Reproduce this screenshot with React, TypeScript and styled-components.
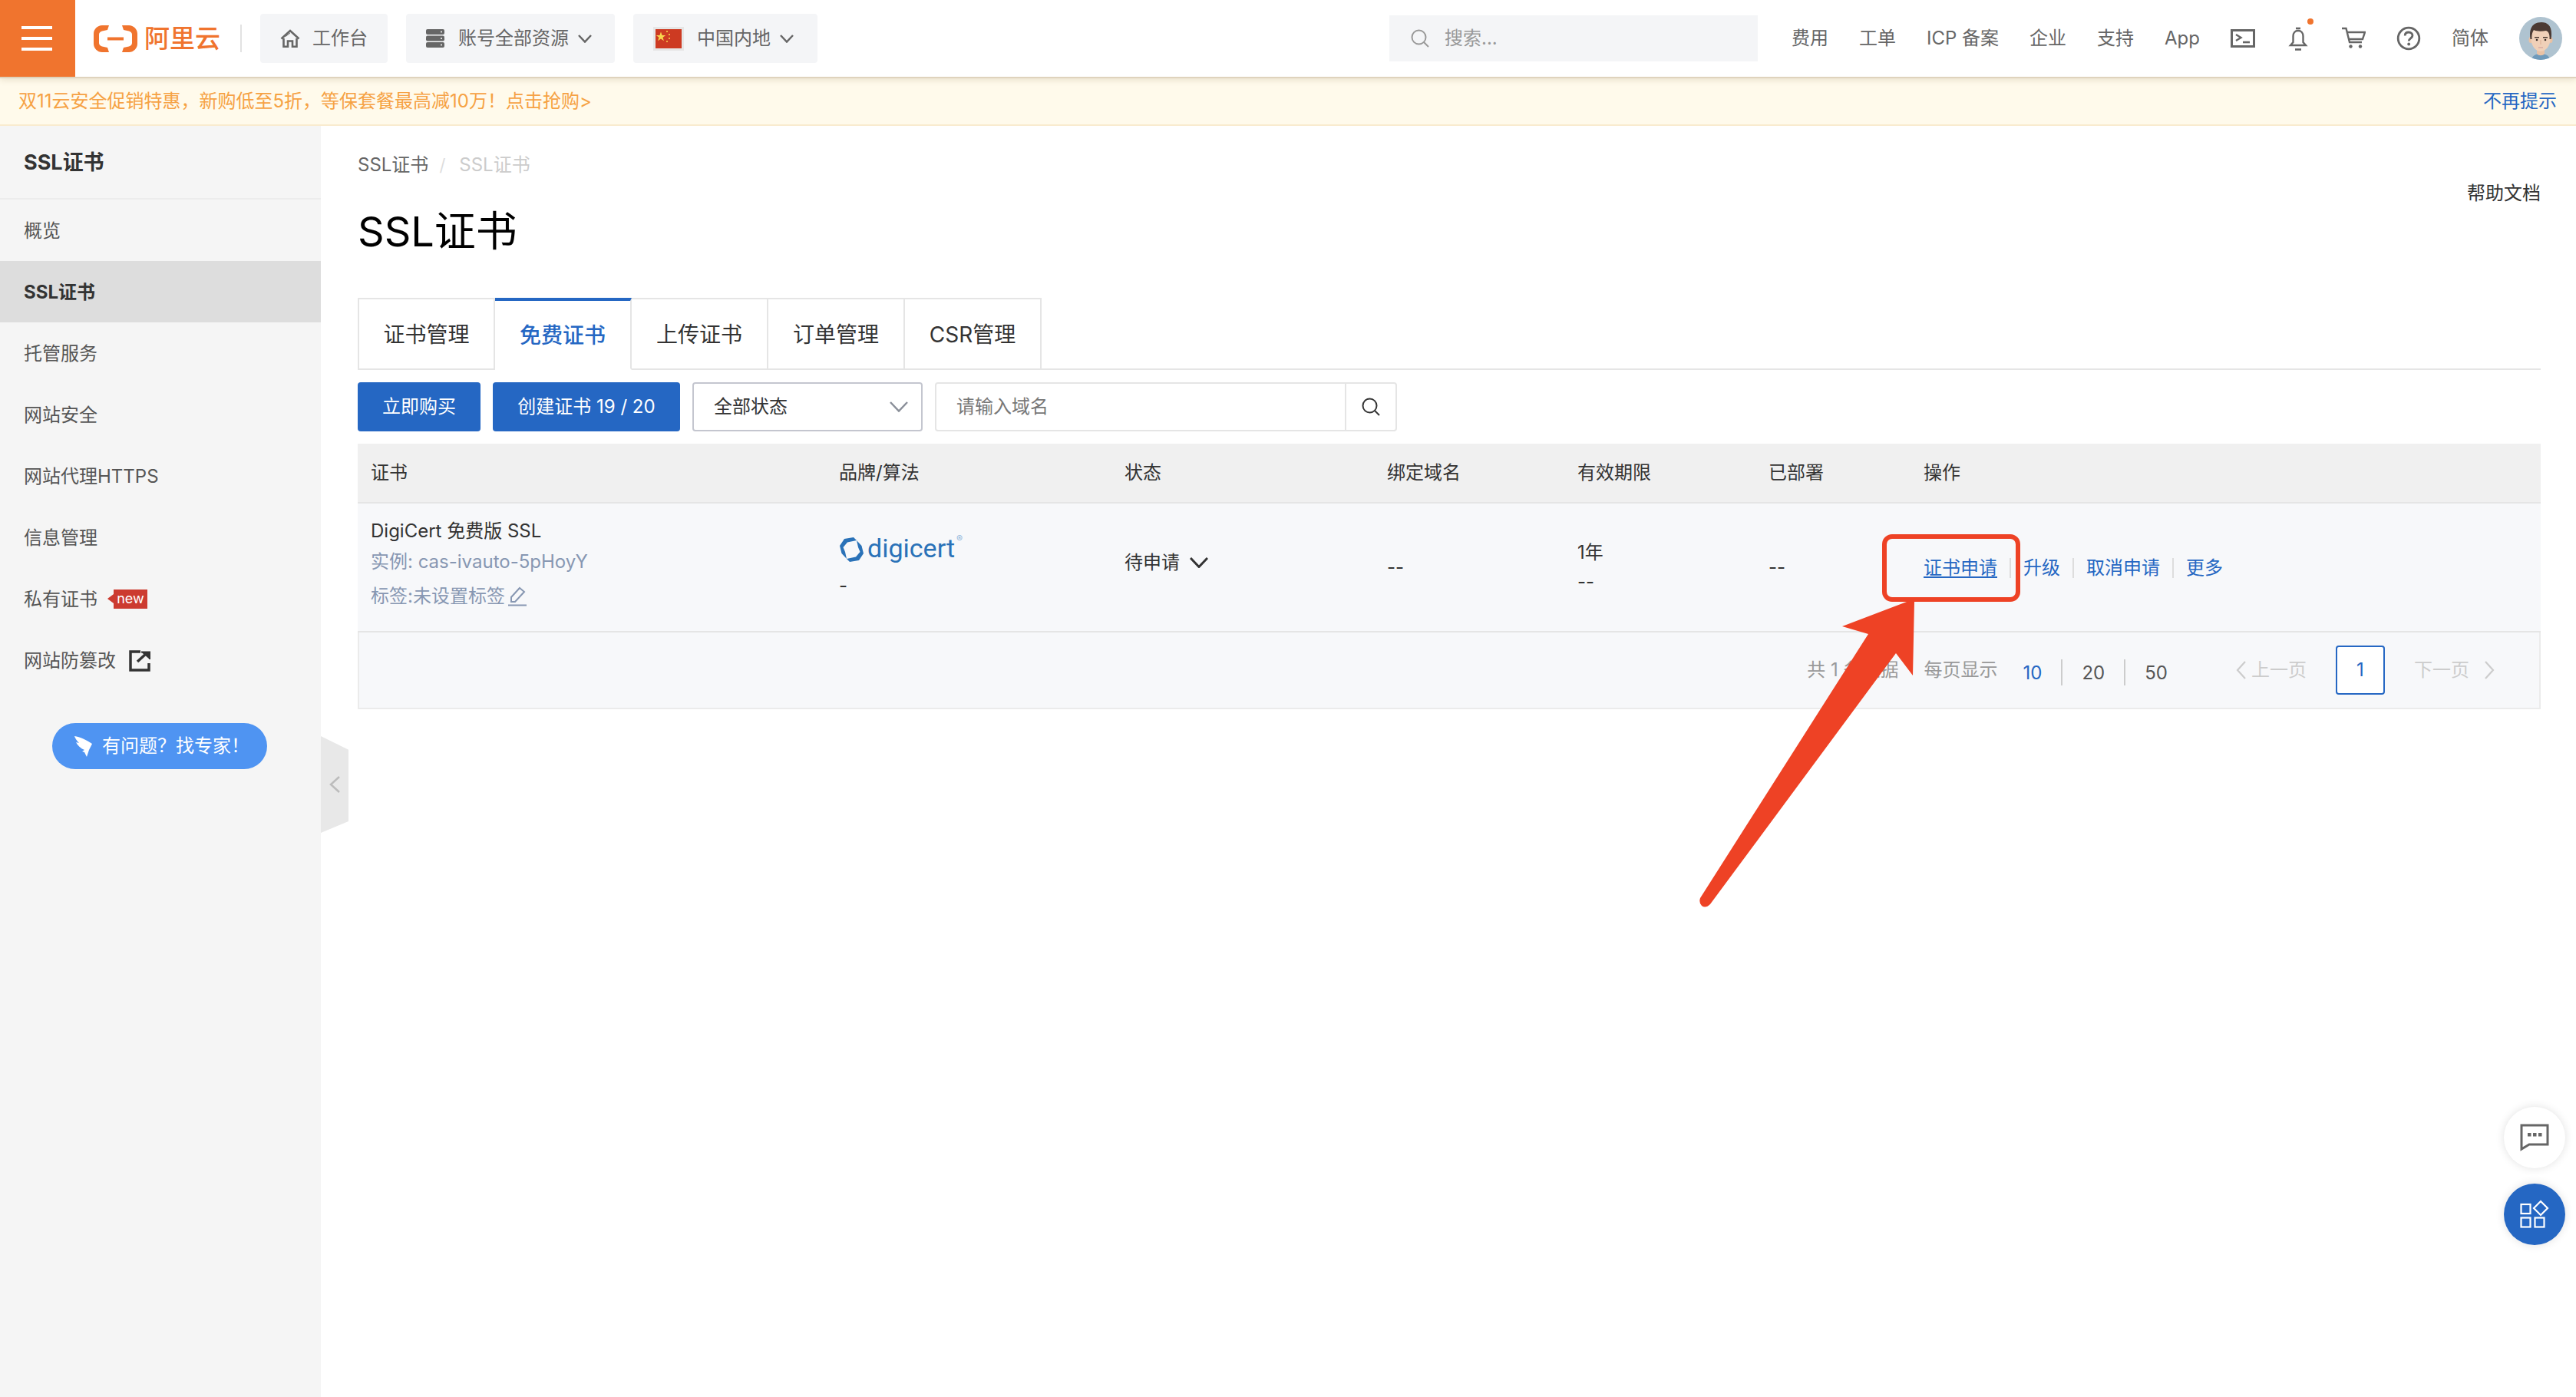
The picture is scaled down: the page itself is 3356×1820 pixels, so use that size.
import React from "react";
import styled, { createGlobalStyle } from "styled-components";

const GlobalStyle = createGlobalStyle`
  html, body { margin: 0; padding: 0; background: #fff; overflow: hidden; }
  * { box-sizing: border-box; }
  body { font-family: Inter, "Noto Sans CJK SC", sans-serif; font-size: 24px; line-height: 34px; color: #333; }
`;

const BLUE = "#2567c3";
const ORANGE = "#f0742e";
const RED = "#ee4225";

const Page = styled.div`
  position: relative;
  width: 3356px;
  height: 1820px;
  overflow: hidden;
  display: flex;
  flex-direction: column;
`;

/* ---------- top bar ---------- */
const TopBar = styled.header`
  position: relative;
  z-index: 2;
  flex: none;
  height: 100px;
  display: flex;
  align-items: center;
  background: #fff;
  box-shadow: 0 2px 0 #dfd3bd, 0 4px 8px rgba(110, 90, 40, 0.16);
`;
const MenuBlock = styled.div`
  width: 98px;
  height: 100px;
  padding: 34px 30px 34px 28px;
  background: ${ORANGE};
  display: flex;
  flex-direction: column;
  justify-content: space-between;
`;
const MenuLine = styled.i`
  display: block;
  height: 4px;
  background: #fff;
`;
const Brand = styled.div`
  margin-left: 24px;
  width: 166px;
  display: flex;
  align-items: center;
  gap: 9px;
`;
const BrandName = styled.span`
  color: ${ORANGE};
  font-size: 33px;
  font-weight: 500;
  line-height: 36px;
  white-space: nowrap;
`;
const BrandDivider = styled.i`
  width: 2px;
  height: 36px;
  margin: 0 24px 0 25px;
  background: #e2e2e2;
`;
const TopButtons = styled.div`
  display: flex;
  gap: 24px;
`;
const TopButton = styled.div<{ $w: number }>`
  width: ${(p) => p.$w}px;
  height: 64px;
  padding-left: 26px;
  display: flex;
  align-items: center;
  background: #f4f5f7;
  border-radius: 4px;
  color: #666;
  white-space: nowrap;
`;
const TopLabel = styled.span<{ $ml: number }>`
  margin-left: ${(p) => p.$ml}px;
`;
const TopChevron = styled.span`
  margin-left: 12px;
  display: flex;
  flex: none;
`;
const TopRight = styled.div`
  margin-left: auto;
  padding-right: 18px;
  display: flex;
  align-items: center;
  gap: 40px;
`;
const SearchBox = styled.div`
  width: 480px;
  height: 60px;
  margin-right: 4px;
  padding-left: 28px;
  display: flex;
  align-items: center;
  gap: 20px;
  background: #f4f5f7;
  color: #999;
`;
const TopLink = styled.span`
  color: #666;
  white-space: nowrap;
`;
const TopIcon = styled.svg`
  display: block;
  flex: none;
`;
const BellWrap = styled.span`
  position: relative;
  display: block;
  width: 32px;
  height: 32px;
`;
const BellDot = styled.i`
  position: absolute;
  left: 28px;
  top: -10px;
  width: 8px;
  height: 8px;
  border-radius: 50%;
  background: ${ORANGE};
`;

/* ---------- banner ---------- */
const Banner = styled.div`
  flex: none;
  height: 64px;
  padding: 2px 25px 0 24px;
  display: flex;
  align-items: center;
  justify-content: space-between;
  background: #fffaeb;
  border-bottom: 2px solid #f9ebcf;
  color: #f6a244;
`;
const BannerClose = styled.span`
  color: ${BLUE};
`;

/* ---------- shell ---------- */
const Shell = styled.div`
  position: relative;
  flex: 1;
  display: flex;
  min-height: 0;
`;
const Sidebar = styled.aside`
  flex: none;
  width: 418px;
  background: #f5f5f5;
`;
const SideTitle = styled.div`
  height: 96px;
  padding: 2px 31px 0;
  display: flex;
  align-items: center;
  border-bottom: 2px solid #ececec;
  font-size: 27px;
  font-weight: 700;
  color: #333;
`;
const SideItem = styled.div<{ $active?: boolean }>`
  height: 80px;
  padding: 2px 0 0 31px;
  display: flex;
  align-items: center;
  background: ${(p) => (p.$active ? "#dddddd" : "transparent")};
  font-weight: ${(p) => (p.$active ? 700 : 400)};
  color: ${(p) => (p.$active ? "#333" : "#555")};
`;
const NewBadge = styled.span`
  position: relative;
  top: -1px;
  margin-left: 21px;
  width: 44px;
  height: 25px;
  background: #cc3b30;
  color: #fff;
  font-size: 18px;
  line-height: 24px;
  text-align: center;
  &::before {
    content: "";
    position: absolute;
    left: -8px;
    top: 6px;
    border: 6px solid transparent;
    border-left: 0;
    border-right: 8px solid #cc3b30;
  }
`;
const ExternalIcon = styled.svg`
  margin-left: 17px;
  flex: none;
`;
const ExpertButton = styled.div`
  width: 280px;
  height: 60px;
  margin: 42px 0 0 68px;
  padding-left: 29px;
  display: flex;
  align-items: center;
  gap: 12px;
  border-radius: 30px;
  background: #4f94f2;
  color: #fff;
  white-space: nowrap;
`;
const CollapseTab = styled.div`
  position: absolute;
  left: 418px;
  top: 795px;
  width: 36px;
  height: 126px;
  display: flex;
  align-items: center;
  justify-content: center;
  background: #e8e8e8;
  clip-path: polygon(0 0, 100% 14%, 100% 88%, 0 100%);
`;

/* ---------- main ---------- */
const Main = styled.main`
  flex: 1;
  min-width: 0;
  padding: 34px 46px 0 48px;
`;
const Crumbs = styled.div`
  display: flex;
  gap: 14px;
  color: #666;
`;
const CrumbSep = styled.span`
  color: #ddd;
  font-size: 22px;
`;
const CrumbCurrent = styled.span`
  color: #ccc;
  margin-left: 4px;
`;
const HeadRow = styled.div`
  margin-top: 3px;
  display: flex;
  justify-content: space-between;
`;
const Title = styled.h1`
  margin: 34px 0 0;
  font-size: 54px;
  line-height: 66px;
  font-weight: 400;
  color: #000;
`;
const HelpLink = styled.span`
  color: #333;
`;
const TabBar = styled.div`
  margin-top: 53px;
  height: 94px;
  display: flex;
  border-bottom: 2px solid #e5e5e5;
`;
const Tab = styled.div<{ $active?: boolean; $first?: boolean }>`
  width: ${(p) => (p.$first ? 179 : 178)}px;
  height: 94px;
  padding-top: 2px;
  display: flex;
  align-items: center;
  justify-content: center;
  background: #fff;
  font-size: 28px;
  font-weight: ${(p) => (p.$active ? 500 : 400)};
  color: ${(p) => (p.$active ? BLUE : "#333")};
  border-top: ${(p) => (p.$active ? `4px solid ${BLUE}` : "2px solid #e5e5e5")};
  border-right: 2px solid #e5e5e5;
  border-left: ${(p) => (p.$first ? "2px solid #e5e5e5" : "0")};
  border-bottom: ${(p) => (p.$active ? "2px solid #fff" : "2px solid #e5e5e5")};
`;
const Toolbar = styled.div`
  margin-top: 16px;
  height: 64px;
  display: flex;
  gap: 16px;
`;
const PrimaryButton = styled.div<{ $w: number }>`
  width: ${(p) => p.$w}px;
  height: 64px;
  display: flex;
  align-items: center;
  justify-content: center;
  border-radius: 4px;
  background: ${BLUE};
  color: #fff;
`;
const StatusSelect = styled.div`
  width: 300px;
  height: 64px;
  padding: 0 17px 0 26px;
  display: flex;
  align-items: center;
  justify-content: space-between;
  border: 2px solid #c4c6cf;
  border-radius: 4px;
  color: #333;
`;
const DomainSearch = styled.div`
  width: 602px;
  height: 64px;
  display: flex;
  border: 2px solid #e5e5e5;
  border-radius: 4px;
`;
const DomainInput = styled.div`
  flex: 1;
  padding-left: 26px;
  display: flex;
  align-items: center;
  color: #777;
`;
const DomainButton = styled.div`
  width: 66px;
  display: flex;
  align-items: center;
  justify-content: center;
  border-left: 2px solid #e5e5e5;
`;

/* ---------- table ---------- */
const Table = styled.div`
  margin-top: 16px;
`;
const COLUMNS = "610px 372px 342px 248px 249px 202px 1fr";
const HeadRowGrid = styled.div`
  height: 78px;
  display: grid;
  grid-template-columns: ${COLUMNS};
  background: #f0f0f0;
  border-bottom: 2px solid #e5e5e5;
`;
const HeadCell = styled.div`
  padding-left: 17px;
  display: flex;
  align-items: center;
  color: #333;
`;
const BodyRow = styled.div`
  height: 168px;
  display: grid;
  grid-template-columns: ${COLUMNS};
  background: #f7f8fa;
  border-bottom: 2px solid #e5e5e5;
`;
const Cell = styled.div<{ $top: number }>`
  padding: ${(p) => p.$top}px 0 0 17px;
  color: #333;
`;
const MutedLine = styled.div<{ $mt: number }>`
  margin-top: ${(p) => p.$mt}px;
  display: flex;
  align-items: center;
  color: #8797b2;
`;
const EditIcon = styled.svg`
  margin-left: 4px;
  flex: none;
`;
const LogoRow = styled.div`
  height: 36px;
  display: flex;
  align-items: center;
`;
const LogoWord = styled.span`
  margin-left: 4px;
  color: #2a72b8;
  font-family: Roboto, sans-serif;
  font-size: 34px;
  line-height: 36px;
  position: relative;
  top: -2px;
`;
const LogoMark = styled.sup`
  margin: -2px 0 0 2px;
  align-self: flex-start;
  color: #8fb5da;
  font-size: 12px;
  line-height: 12px;
`;
const SmallLine = styled.div<{ $mt: number }>`
  margin-top: ${(p) => p.$mt}px;
`;
const StatusRow = styled.div`
  display: flex;
  align-items: center;
  gap: 13px;
`;
const ActionRow = styled.div`
  display: flex;
  align-items: center;
  white-space: nowrap;
`;
const ActionLink = styled.span<{ $underline?: boolean }>`
  color: ${BLUE};
  text-decoration: ${(p) => (p.$underline ? "underline" : "none")};
  text-underline-offset: 3px;
`;
const ActionSep = styled.i`
  width: 2px;
  height: 26px;
  margin: 0 16px;
  background: #ddd;
`;

const Pager = styled.div`
  height: 100px;
  padding: 0 58px 0 0;
  display: flex;
  align-items: center;
  justify-content: flex-end;
  background: #f7f8fa;
  border: 2px solid #ebebeb;
  border-top: 0;
  white-space: nowrap;
`;
const PagerText = styled.span<{ $mr: number }>`
  margin-right: ${(p) => p.$mr}px;
  color: #999;
`;
const SizeOption = styled.span<{ $active?: boolean }>`
  padding-top: 7px;
  color: ${(p) => (p.$active ? BLUE : "#555")};
`;
const SizeSep = styled.i`
  width: 2px;
  height: 34px;
  margin: 6px 25px 0;
  background: #ccc;
`;
const PrevNext = styled.span<{ $ml: number; $gap: number }>`
  margin-left: ${(p) => p.$ml}px;
  display: flex;
  align-items: center;
  gap: ${(p) => p.$gap}px;
  color: #ccc;
`;
const PageBox = styled.span`
  width: 64px;
  height: 64px;
  margin-left: 38px;
  display: flex;
  align-items: center;
  justify-content: center;
  background: #fff;
  border: 2px solid ${BLUE};
  border-radius: 4px;
  color: ${BLUE};
`;

/* ---------- overlays ---------- */
const Fab = styled.div<{ $top: number; $blue?: boolean }>`
  position: absolute;
  right: 14px;
  top: ${(p) => p.$top}px;
  width: 80px;
  height: 80px;
  display: flex;
  align-items: center;
  justify-content: center;
  border-radius: 50%;
  background: ${(p) => (p.$blue ? BLUE : "#fff")};
  box-shadow: 0 0 12px rgba(0, 0, 0, 0.12);
`;
const Annotation = styled.svg`
  position: absolute;
  left: 0;
  top: 0;
  pointer-events: none;
`;

const Chevron = ({ w = 18, h = 11, c = "#666", sw = 2.5 }: { w?: number; h?: number; c?: string; sw?: number }) => (
  <svg width={w} height={h} viewBox={`0 0 ${w} ${h}`} fill="none">
    <path d={`M1 1 L${w / 2} ${h - 1.5} L${w - 1} 1`} stroke={c} strokeWidth={sw} />
  </svg>
);

const SearchGlyph = ({ c, s }: { c: string; s: number }) => (
  <svg width={s} height={s} viewBox="0 0 24 24" fill="none">
    <circle cx="10.5" cy="10.5" r="9" stroke={c} strokeWidth="2" />
    <path d="M17 17 L23 23" stroke={c} strokeWidth="2" />
  </svg>
);

const AliLogo = () => (
  <svg width="57" height="35" viewBox="0 0 57 35" fill={ORANGE}>
    <path d="M20 0 H11 C5 0 0 5 0 11 V24 C0 30 5 35 11 35 H20 L18 29 L11 27.500 C8.500 27 7 25 7 23 V12 C7 10 8.500 8 11 7.500 L18 6 Z" />
    <path d="M37 0 H46 C52 0 57 5 57 11 V24 C57 30 52 35 46 35 H37 L39 29 L46 27.500 C48.500 27 50 25 50 23 V12 C50 10 48.500 8 46 7.500 L39 6 Z" />
    <rect x="18" y="15.500" width="21" height="4" />
  </svg>
);

const HomeIcon = () => (
  <svg width="26" height="24" viewBox="0 0 26 24" fill="none" stroke="#666" strokeWidth="2.600">
    <path d="M1.500 12.500 L13 2 L24.500 12.500" />
    <path d="M4.500 12 V22.800 H10 V15.500 H16 V22.800 H21.500 V12" />
    <path d="M7 9.500 L13 5" strokeWidth="1" />
  </svg>
);

const ServerIcon = () => (
  <svg width="24" height="24" viewBox="0 0 24 24">
    <rect x="0" y="0" width="24" height="7" rx="2" fill="#666" />
    <rect x="0" y="8.500" width="24" height="7" rx="2" fill="#666" />
    <rect x="0" y="17" width="24" height="7" rx="2" fill="#666" />
    <circle cx="20" cy="3.500" r="1" fill="#fff" />
    <circle cx="20" cy="12" r="1" fill="#fff" />
    <circle cx="20" cy="20.500" r="1" fill="#fff" />
  </svg>
);

const FlagIcon = () => (
  <svg width="40" height="31" viewBox="0 0 40 31">
    <rect width="40" height="31" fill="#e6e6e6" />
    <rect x="3" y="3" width="34" height="25" fill="#cd3a22" />
    <polygon fill="#f8d64e" points="10,6.500 11.600,11 16.200,11 12.500,13.800 13.900,18.300 10,15.600 6.100,18.300 7.500,13.800 3.800,11 8.400,11" />
    <circle cx="18" cy="6" r="1" fill="#f8d64e" />
    <circle cx="21" cy="10" r="1" fill="#f8d64e" />
    <circle cx="21" cy="15" r="1" fill="#f8d64e" />
    <circle cx="18" cy="19" r="1" fill="#f8d64e" />
  </svg>
);

const TerminalIcon = () => (
  <TopIcon width="32" height="24" viewBox="0 0 32 24" fill="none" stroke="#666">
    <rect x="1.500" y="1.500" width="29" height="21" strokeWidth="3" />
    <path d="M7 7 L13.500 11 L7 15" strokeWidth="2.400" />
    <path d="M16 17 H25" strokeWidth="2.600" />
  </TopIcon>
);

const BellIcon = () => (
  <BellWrap>
    <BellDot />
    <TopIcon width="32" height="32" viewBox="0 0 32 32" fill="none" stroke="#666" strokeWidth="2.400">
      <path d="M13 3 H19" strokeWidth="2.600" />
      <path d="M9.500 21 V13 C9.500 9 12 6 16 6 C20 6 22.500 9 22.500 13 V21 L26 25 H6 Z" />
      <path d="M12 30.500 H20" strokeWidth="2.600" />
    </TopIcon>
  </BellWrap>
);

const CartIcon = () => (
  <TopIcon width="32" height="30" viewBox="0 0 32 30" fill="none" stroke="#666" strokeWidth="2.400">
    <path d="M1 2 H6.500 L11 20 H27" />
    <path d="M7.500 7 H31 L28 16 H10" />
    <circle cx="12.500" cy="25.500" r="2.200" fill="#666" stroke="none" />
    <circle cx="25" cy="25.500" r="2.200" fill="#666" stroke="none" />
  </TopIcon>
);

const HelpIcon = () => (
  <TopIcon width="32" height="32" viewBox="0 0 32 32" fill="none">
    <circle cx="16" cy="16" r="13.800" stroke="#666" strokeWidth="2.800" />
    <path d="M11.200 12.500 C11.200 9.500 13.200 8 16 8 C19 8 21 9.800 21 12.300 C21 15.800 16.200 15.800 16.200 19.500" stroke="#666" strokeWidth="2.800" />
    <circle cx="16.200" cy="23.500" r="1.900" fill="#666" />
  </TopIcon>
);

const Avatar = () => (
  <TopIcon width="56" height="56" viewBox="0 0 56 56">
    <defs>
      <clipPath id="avatarClip">
        <circle cx="28" cy="28" r="28" />
      </clipPath>
    </defs>
    <g clipPath="url(#avatarClip)">
      <rect width="56" height="56" fill="#afc3d0" />
      <path d="M16 56 C17 50 22 48 28 48 C34 48 39 50 40 56 Z" fill="#6f9abb" />
      <path d="M23 38 H33 V48 C31 51 25 51 23 48 Z" fill="#e9c2a5" />
      <ellipse cx="15" cy="30" rx="2.500" ry="4" fill="#e9c2a5" />
      <ellipse cx="41" cy="30" rx="2.500" ry="4" fill="#e9c2a5" />
      <path d="M15.500 20 C15.500 10 40.500 10 40.500 20 V29 C40.500 38 34 45 28 45 C22 45 15.500 38 15.500 29 Z" fill="#f0d0b8" />
      <path d="M14.500 29 C12 12 20 7 29 7 C38 7 44 13 41.500 29 L39.500 29 C40 22 38 19 35 18 C29 19 22 19 19 17 C17 20 16 24 16.500 29 Z" fill="#4b3a33" />
      <rect x="20" y="26" width="6" height="1.500" fill="#4b3a33" />
      <rect x="31" y="26" width="6" height="1.500" fill="#4b3a33" />
      <circle cx="23" cy="30" r="1.300" fill="#3a2e29" />
      <circle cx="34" cy="30" r="1.300" fill="#3a2e29" />
      <path d="M28 30 V36" stroke="#dcb094" strokeWidth="1" />
      <path d="M25 40 H31" stroke="#c99" strokeWidth="1" />
    </g>
  </TopIcon>
);

const SWOOSH = "M19 1 L7 3 L1 12 L3.500 22 L10 29 L8 20 L5.500 14 L11 7.500 L23 5 Z";
const DigicertSeal = () => (
  <svg width="33" height="34" viewBox="0 0 33 34" fill="#2a72b8">
    <path d={SWOOSH} />
    <path d={SWOOSH} transform="rotate(180 16.500 17)" />
  </svg>
);

const navItems = ["费用", "工单", "ICP 备案", "企业", "支持", "App"];
const sideItems = ["托管服务", "网站安全", "网站代理HTTPS", "信息管理"];
const tabs = ["证书管理", "免费证书", "上传证书", "订单管理", "CSR管理"];
const heads = ["证书", "品牌/算法", "状态", "绑定域名", "有效期限", "已部署", "操作"];
const bannerText =
  "双11云安全促销特惠\uFF0C新购低至5折\uFF0C等保套餐最高减10万\uFF01点击抢购>";
const expertText = "有问题\uFF1F找专家\uFF01";

export default function App() {
  return (
    <Page>
      <GlobalStyle />
      <TopBar>
        <MenuBlock>
          <MenuLine />
          <MenuLine />
          <MenuLine />
        </MenuBlock>
        <Brand>
          <AliLogo />
          <BrandName>阿里云</BrandName>
        </Brand>
        <BrandDivider />
        <TopButtons>
          <TopButton $w={166}>
            <HomeIcon />
            <TopLabel $ml={16}>工作台</TopLabel>
          </TopButton>
          <TopButton $w={272}>
            <ServerIcon />
            <TopLabel $ml={18}>账号全部资源</TopLabel>
            <TopChevron>
              <Chevron />
            </TopChevron>
          </TopButton>
          <TopButton $w={240}>
            <FlagIcon />
            <TopLabel $ml={17}>中国内地</TopLabel>
            <TopChevron>
              <Chevron />
            </TopChevron>
          </TopButton>
        </TopButtons>
        <TopRight>
          <SearchBox>
            <SearchGlyph c="#999" s={24} />
            <span>搜索...</span>
          </SearchBox>
          {navItems.map((t) => (
            <TopLink key={t}>{t}</TopLink>
          ))}
          <TerminalIcon />
          <BellIcon />
          <CartIcon />
          <HelpIcon />
          <TopLink>简体</TopLink>
          <Avatar />
        </TopRight>
      </TopBar>

      <Banner>
        <span>{bannerText}</span>
        <BannerClose>不再提示</BannerClose>
      </Banner>

      <Shell>
        <Sidebar>
          <SideTitle>SSL证书</SideTitle>
          <SideItem>概览</SideItem>
          <SideItem $active>SSL证书</SideItem>
          {sideItems.map((t) => (
            <SideItem key={t}>{t}</SideItem>
          ))}
          <SideItem>
            私有证书
            <NewBadge>new</NewBadge>
          </SideItem>
          <SideItem>
            网站防篡改
            <ExternalIcon width="28" height="28" viewBox="0 0 28 28" fill="none" stroke="#333" strokeWidth="3.500">
              <path d="M15 2 H2 V26 H26 V17" />
              <path d="M11 15 L23 4" />
              <path d="M16 2.500 H27 V12" fill="#333" strokeWidth="2" />
            </ExternalIcon>
          </SideItem>
          <ExpertButton>
            <svg width="24" height="28" viewBox="0 0 24 28" fill="#fff">
              <path d="M0 1 C7 2 16 6 23 11 L19 19 L16 28 L13 22 L10 21 L13 19 C8 17 4 13 2 9 L6 10 C3 7 1 4 0 1 Z" />
            </svg>
            <span>{expertText}</span>
          </ExpertButton>
        </Sidebar>
        <CollapseTab>
          <svg width="14" height="22" viewBox="0 0 14 22" fill="none">
            <path d="M13 1 L2 11 L13 21" stroke="#bcbcbc" strokeWidth="2.500" />
          </svg>
        </CollapseTab>

        <Main>
          <Crumbs>
            <span>SSL证书</span>
            <CrumbSep>/</CrumbSep>
            <CrumbCurrent>SSL证书</CrumbCurrent>
          </Crumbs>
          <HeadRow>
            <Title>SSL证书</Title>
            <HelpLink>帮助文档</HelpLink>
          </HeadRow>
          <TabBar>
            {tabs.map((t, i) => (
              <Tab key={t} $active={i === 1} $first={i === 0}>
                {t}
              </Tab>
            ))}
          </TabBar>
          <Toolbar>
            <PrimaryButton $w={160}>立即购买</PrimaryButton>
            <PrimaryButton $w={244}>创建证书 19 / 20</PrimaryButton>
            <StatusSelect>
              全部状态
              <Chevron w={24} h={14} c="#8a8f99" sw={2.500} />
            </StatusSelect>
            <DomainSearch>
              <DomainInput>请输入域名</DomainInput>
              <DomainButton>
                <SearchGlyph c="#333" s={24} />
              </DomainButton>
            </DomainSearch>
          </Toolbar>

          <Table>
            <HeadRowGrid>
              {heads.map((h) => (
                <HeadCell key={h}>{h}</HeadCell>
              ))}
            </HeadRowGrid>
            <BodyRow>
              <Cell $top={19}>
                DigiCert 免费版 SSL
                <MutedLine $mt={6}>实例: cas-ivauto-5pHoyY</MutedLine>
                <MutedLine $mt={11}>
                  标签:未设置标签
                  <EditIcon width="24" height="26" viewBox="0 0 24 26" fill="none" stroke="#8797b2" strokeWidth="2">
                    <path d="M15 2 L21 7 L9 20 L4 20 L4 14 Z" />
                    <path d="M0 24.500 H24" />
                  </EditIcon>
                </MutedLine>
              </Cell>
              <Cell $top={42}>
                <LogoRow>
                  <DigicertSeal />
                  <LogoWord>digicert</LogoWord>
                  <LogoMark>®</LogoMark>
                </LogoRow>
                <SmallLine $mt={12}>-</SmallLine>
              </Cell>
              <Cell $top={60}>
                <StatusRow>
                  待申请
                  <Chevron w={24} h={14} c="#333" sw={3} />
                </StatusRow>
              </Cell>
              <Cell $top={66}>--</Cell>
              <Cell $top={47}>
                1年
                <SmallLine $mt={4}>--</SmallLine>
              </Cell>
              <Cell $top={66}>--</Cell>
              <Cell $top={67}>
                <ActionRow>
                  <ActionLink $underline>证书申请</ActionLink>
                  <ActionSep />
                  <ActionLink>升级</ActionLink>
                  <ActionSep />
                  <ActionLink>取消申请</ActionLink>
                  <ActionSep />
                  <ActionLink>更多</ActionLink>
                </ActionRow>
              </Cell>
            </BodyRow>
            <Pager>
              <PagerText $mr={33}>共 1 条数据</PagerText>
              <PagerText $mr={33}>每页显示</PagerText>
              <SizeOption $active>10</SizeOption>
              <SizeSep />
              <SizeOption>20</SizeOption>
              <SizeSep />
              <SizeOption>50</SizeOption>
              <PrevNext $ml={89} $gap={7}>
                <svg width="13" height="24" viewBox="0 0 13 24" fill="none">
                  <path d="M12 1 L2 12 L12 23" stroke="#ccc" strokeWidth="2.200" />
                </svg>
                上一页
              </PrevNext>
              <PageBox>1</PageBox>
              <PrevNext $ml={38} $gap={20}>
                下一页
                <svg width="13" height="24" viewBox="0 0 13 24" fill="none">
                  <path d="M1 1 L11 12 L1 23" stroke="#ccc" strokeWidth="2.200" />
                </svg>
              </PrevNext>
            </Pager>
          </Table>
        </Main>
      </Shell>

      <Fab $top={1442}>
        <svg width="38" height="36" viewBox="0 0 38 36" fill="none">
          <path d="M2 2 H36 V27 H12 L2 33 Z" stroke="#666" strokeWidth="3" />
          <rect x="10" y="12" width="4.500" height="4.500" fill="#666" />
          <rect x="17" y="12" width="4.500" height="4.500" fill="#666" />
          <rect x="24" y="12" width="4.500" height="4.500" fill="#666" />
        </svg>
      </Fab>
      <Fab $top={1542} $blue>
        <svg width="38" height="38" viewBox="0 0 38 38" fill="none" stroke="#fff" strokeWidth="2.200">
          <rect x="1.500" y="6" width="12" height="12" />
          <rect x="1.500" y="23.500" width="12" height="12" />
          <rect x="19.500" y="23.500" width="12" height="12" />
          <path d="M27 2 L36 11 L27 20 L18 11 Z" />
        </svg>
      </Fab>

      <Annotation width="3356" height="1820" viewBox="0 0 3356 1820" fill="none">
        <rect x="2455" y="699" width="174" height="82" rx="10" stroke={RED} strokeWidth="6" />
        <path
          d="M2484 784 L2494 784 L2492 880 L2470 851 L2228 1178 Q2222 1184 2217 1180 Q2213 1176 2215 1170 L2434 826 L2400 816 Z"
          fill={RED}
        />
      </Annotation>
    </Page>
  );
}
